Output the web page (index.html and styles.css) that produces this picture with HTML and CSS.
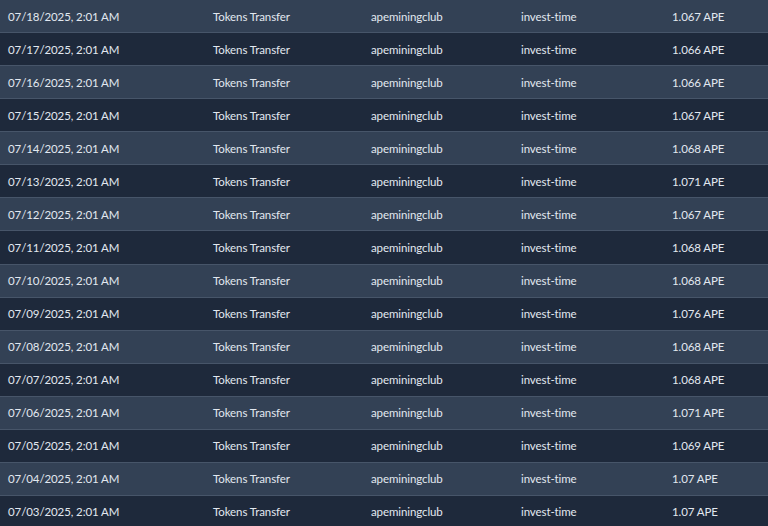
FILE: index.html
```html
<!DOCTYPE html>
<html lang="en">
<head>
    <meta charset="UTF-8">
    <title>Transfers</title>
    <link rel="stylesheet" href="styles.css">
</head>
<body>
    <table class="history">
        <tbody>
            <tr><td>07/18/2025, 2:01 AM</td><td>Tokens Transfer</td><td>apeminingclub</td><td>invest-time</td><td>1.067 APE</td></tr>
            <tr><td>07/17/2025, 2:01 AM</td><td>Tokens Transfer</td><td>apeminingclub</td><td>invest-time</td><td>1.066 APE</td></tr>
            <tr><td>07/16/2025, 2:01 AM</td><td>Tokens Transfer</td><td>apeminingclub</td><td>invest-time</td><td>1.066 APE</td></tr>
            <tr><td>07/15/2025, 2:01 AM</td><td>Tokens Transfer</td><td>apeminingclub</td><td>invest-time</td><td>1.067 APE</td></tr>
            <tr><td>07/14/2025, 2:01 AM</td><td>Tokens Transfer</td><td>apeminingclub</td><td>invest-time</td><td>1.068 APE</td></tr>
            <tr><td>07/13/2025, 2:01 AM</td><td>Tokens Transfer</td><td>apeminingclub</td><td>invest-time</td><td>1.071 APE</td></tr>
            <tr><td>07/12/2025, 2:01 AM</td><td>Tokens Transfer</td><td>apeminingclub</td><td>invest-time</td><td>1.067 APE</td></tr>
            <tr><td>07/11/2025, 2:01 AM</td><td>Tokens Transfer</td><td>apeminingclub</td><td>invest-time</td><td>1.068 APE</td></tr>
            <tr><td>07/10/2025, 2:01 AM</td><td>Tokens Transfer</td><td>apeminingclub</td><td>invest-time</td><td>1.068 APE</td></tr>
            <tr><td>07/09/2025, 2:01 AM</td><td>Tokens Transfer</td><td>apeminingclub</td><td>invest-time</td><td>1.076 APE</td></tr>
            <tr><td>07/08/2025, 2:01 AM</td><td>Tokens Transfer</td><td>apeminingclub</td><td>invest-time</td><td>1.068 APE</td></tr>
            <tr><td>07/07/2025, 2:01 AM</td><td>Tokens Transfer</td><td>apeminingclub</td><td>invest-time</td><td>1.068 APE</td></tr>
            <tr><td>07/06/2025, 2:01 AM</td><td>Tokens Transfer</td><td>apeminingclub</td><td>invest-time</td><td>1.071 APE</td></tr>
            <tr><td>07/05/2025, 2:01 AM</td><td>Tokens Transfer</td><td>apeminingclub</td><td>invest-time</td><td>1.069 APE</td></tr>
            <tr><td>07/04/2025, 2:01 AM</td><td>Tokens Transfer</td><td>apeminingclub</td><td>invest-time</td><td>1.07 APE</td></tr>
            <tr><td>07/03/2025, 2:01 AM</td><td>Tokens Transfer</td><td>apeminingclub</td><td>invest-time</td><td>1.07 APE</td></tr>
        </tbody>
    </table>
</body>
</html>
```

FILE: styles.css
```css
body {
    margin: 0;
    background-color: #1e293b;
    font-family: 'Lato', sans-serif;
    font-size: 11.5px;
    letter-spacing: -0.1px;
    color: #e2e8f0;
}

.history {
    border-collapse: collapse;
    width: 100%;
    table-layout: fixed;
}

.history td {
    height: 32.07px;
    padding: 0 8px;
    border-bottom: 1px solid #475569;
    white-space: nowrap;
}

.history td:nth-child(1) { width: 189px; }
.history td:nth-child(2) { width: 142px; }
.history td:nth-child(3) { width: 134px; }
.history td:nth-child(4) { width: 135px; }

.history tr:nth-child(odd) {
    background-color: #334155;
}

.history tr:nth-child(even) {
    background-color: #1e293b;
}
```
